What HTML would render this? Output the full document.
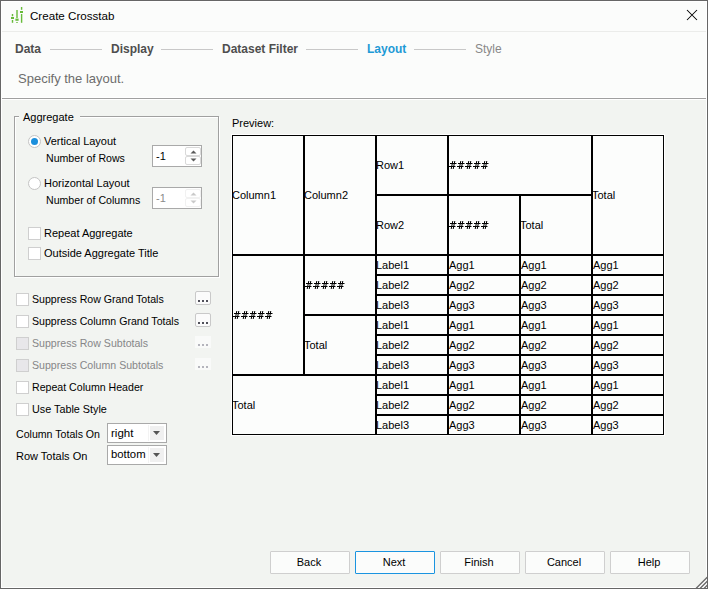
<!DOCTYPE html>
<html><head><meta charset="utf-8">
<style>
*{margin:0;padding:0;box-sizing:border-box}
html,body{width:708px;height:589px;overflow:hidden;background:#fbfcfb}
body{font-family:"Liberation Sans",sans-serif;font-size:12px;color:#000;position:relative}
.a{position:absolute;white-space:nowrap}
#win{position:absolute;left:0;top:0;width:708px;height:589px;border:1px solid #666;background:#fbfcfb}
#inner{position:absolute;left:1px;top:1px;width:706px;height:587px;border:1px solid #fff;}
#body{position:absolute;left:2px;top:100px;width:704px;height:487px;background:#f2f4f1}
.step{font-weight:bold;color:#4e4e4e;font-size:12px}
.sline{position:absolute;height:1px;background:#c8c8c8}
.cb{position:absolute;width:13px;height:13px;border:1px solid #cfcfcf;background:#fff}
.cb.d{background:#e9e9e9;border-color:#ddd}
.btn{position:absolute;top:551px;width:80px;height:23px;border:1px solid #cfcfcf;background:#fbfcfb;border-radius:1px;text-align:center;line-height:21px;padding-right:2px;font-size:11px;color:#000}
#prev{position:absolute;left:231px;top:134px;width:434px;height:302px;background:#fff}
.c{position:absolute;border:1px solid #000;background:#fcfdfc;font-size:11px;line-height:11px;display:flex;align-items:center;padding-left:0px;white-space:nowrap;overflow:hidden}

.t11{font-size:11px;color:#000}
.radio{position:absolute;width:13px;height:13px;border:1px solid #c4c4c4;border-radius:50%;background:#fff}
.radio i{position:absolute;left:2px;top:2px;width:7px;height:7px;border-radius:50%;background:#1b8fdc}
.t11.dis{color:#868688}
.cb.d{background:#e8e7ea;border-color:#cfcfcf}
</style></head><body>
<div id="win"></div>
<div id="inner"></div>
<!-- title -->
<svg class="a" style="left:0;top:0" width="30" height="30" viewBox="0 0 30 30"><g fill="#67bb3a">
<rect x="11.8" y="14" width="1.4" height="2.2"/><rect x="11" y="17" width="3" height="2"/><rect x="11.8" y="20" width="1.4" height="2.8"/>
<rect x="16.3" y="10" width="1.4" height="8"/><rect x="15.4" y="18.6" width="3.2" height="2.2"/><rect x="16.3" y="22" width="1.4" height="1"/>
<rect x="20.9" y="7" width="1.4" height="2.8"/><rect x="20" y="11" width="3" height="2"/><rect x="20.9" y="14" width="1.4" height="8.8"/>
</g></svg>
<div class="a" style="left:30px;top:9px;font-size:11.6px;color:#000">Create Crosstab</div>
<svg class="a" style="left:686px;top:9px" width="12" height="12" viewBox="0 0 12 12"><path d="M1 1L11 11M11 1L1 11" stroke="#000" stroke-width="1.05"/></svg>
<div class="a" style="left:2px;top:31px;width:704px;height:1px;background:#ebecea"></div>
<!-- steps -->
<div class="a step" style="left:15px;top:42px">Data</div>
<div class="sline" style="left:50px;top:49px;width:52px"></div>
<div class="a step" style="left:111px;top:42px">Display</div>
<div class="sline" style="left:161px;top:49px;width:52px"></div>
<div class="a step" style="left:222px;top:42px">Dataset Filter</div>
<div class="sline" style="left:306px;top:49px;width:52px"></div>
<div class="a step" style="left:367px;top:42px;color:#1e9ad6">Layout</div>
<div class="sline" style="left:414px;top:49px;width:52px"></div>
<div class="a" style="left:475px;top:42px;color:#888;font-size:12px">Style</div>
<div class="a" style="left:18px;top:71px;color:#6d6d6d;font-size:13px">Specify the layout.</div>
<div class="a" style="left:2px;top:97px;width:704px;height:1px;background:#fff"></div>
<div class="a" style="left:2px;top:98px;width:704px;height:1px;background:#a0a0a0"></div>
<div class="a" style="left:2px;top:99px;width:704px;height:1px;background:#fff"></div>
<div id="body"></div>
<!-- group box -->
<div class="a" style="left:15px;top:117px;width:205px;height:161px;border:1px solid #fff"></div>
<div class="a" style="left:14px;top:116px;width:205px;height:161px;border:1px solid #a0a0a0"></div>
<div class="a t11" style="left:19px;top:111px;padding:0 6px 0 4px;background:#f2f4f1">Aggregate</div>
<div class="radio" style="left:28px;top:135px"><i></i></div>
<div class="a t11" style="left:44px;top:135px">Vertical Layout</div>
<div class="a t11" style="left:46px;top:152px;font-size:10.6px">Number of Rows</div>
<svg class="a" style="left:152px;top:145px" width="50" height="22" viewBox="0 0 50 22">
<rect x="0.5" y="0.5" width="49" height="21" fill="#fff" stroke="#a9a9a9"/>
<rect x="33.5" y="2.5" width="15" height="8" rx="1.5" fill="#fff" stroke="#d9d9d9"/>
<rect x="33.5" y="11.5" width="15" height="8" rx="1.5" fill="#fff" stroke="#d9d9d9"/>
<polygon points="38.5,8.5 44.5,8.5 41.5,5.5" fill="#5a5a5a"/>
<polygon points="38.5,13.5 44.5,13.5 41.5,16.5" fill="#5a5a5a"/>
</svg><div class="a t11" style="left:156px;top:150px;color:#000">-1</div>
<div class="radio" style="left:28px;top:177px"></div>
<div class="a t11" style="left:44px;top:177px">Horizontal Layout</div>
<div class="a t11" style="left:46px;top:194px;font-size:10.6px">Number of Columns</div>
<svg class="a" style="left:152px;top:187px" width="50" height="22" viewBox="0 0 50 22">
<rect x="0.5" y="0.5" width="49" height="21" fill="#fff" stroke="#a9a9a9"/>
<rect x="33.5" y="2.5" width="15" height="8" rx="1.5" fill="#fff" stroke="#f1f1f1"/>
<rect x="33.5" y="11.5" width="15" height="8" rx="1.5" fill="#fff" stroke="#f1f1f1"/>
<polygon points="38.5,8.5 44.5,8.5 41.5,5.5" fill="#c9c9c9"/>
<polygon points="38.5,13.5 44.5,13.5 41.5,16.5" fill="#c9c9c9"/>
</svg><div class="a t11" style="left:156px;top:192px;color:#8a8a8a">-1</div>
<div class="cb" style="left:28px;top:227px"></div>
<div class="a t11" style="left:44px;top:227px">Repeat Aggregate</div>
<div class="cb" style="left:28px;top:247px"></div>
<div class="a t11" style="left:44px;top:247px">Outside Aggregate Title</div>
<!-- checkboxes -->
<div class="cb" style="left:16px;top:293px"></div>
<div class="a t11" style="left:32px;top:293px;font-size:10.6px">Suppress Row Grand Totals</div>
<div class="a" style="left:195px;top:291px;width:16px;height:14px;border:1px solid #c9c9c9;border-radius:2px;background:#fbfbfb"></div><div class="a" style="left:198px;top:300px;width:2px;height:2px;background:#50505a"></div><div class="a" style="left:202px;top:300px;width:2px;height:2px;background:#50505a"></div><div class="a" style="left:206px;top:300px;width:2px;height:2px;background:#50505a"></div>
<div class="cb" style="left:16px;top:315px"></div>
<div class="a t11" style="left:32px;top:315px;font-size:10.6px">Suppress Column Grand Totals</div>
<div class="a" style="left:195px;top:313px;width:16px;height:14px;border:1px solid #c9c9c9;border-radius:2px;background:#fbfbfb"></div><div class="a" style="left:198px;top:322px;width:2px;height:2px;background:#50505a"></div><div class="a" style="left:202px;top:322px;width:2px;height:2px;background:#50505a"></div><div class="a" style="left:206px;top:322px;width:2px;height:2px;background:#50505a"></div>
<div class="cb d" style="left:16px;top:337px"></div>
<div class="a t11 dis" style="left:32px;top:337px;font-size:10.6px">Suppress Row Subtotals</div>
<div class="a" style="left:195px;top:336px;width:16px;height:12px;background:#f9faf9"></div><div class="a" style="left:198px;top:344px;width:2px;height:2px;background:#b4b4bc"></div><div class="a" style="left:202px;top:344px;width:2px;height:2px;background:#b4b4bc"></div><div class="a" style="left:206px;top:344px;width:2px;height:2px;background:#b4b4bc"></div>
<div class="cb d" style="left:16px;top:359px"></div>
<div class="a t11 dis" style="left:32px;top:359px;font-size:10.6px">Suppress Column Subtotals</div>
<div class="a" style="left:195px;top:358px;width:16px;height:12px;background:#f9faf9"></div><div class="a" style="left:198px;top:366px;width:2px;height:2px;background:#b4b4bc"></div><div class="a" style="left:202px;top:366px;width:2px;height:2px;background:#b4b4bc"></div><div class="a" style="left:206px;top:366px;width:2px;height:2px;background:#b4b4bc"></div>
<div class="cb" style="left:16px;top:381px"></div>
<div class="a t11" style="left:32px;top:381px;font-size:10.6px">Repeat Column Header</div>
<div class="cb" style="left:16px;top:403px"></div>
<div class="a t11" style="left:32px;top:403px;font-size:10.8px">Use Table Style</div>
<div class="a t11" style="left:16px;top:428px;font-size:10.6px">Column Totals On</div>
<div class="a" style="left:107px;top:423px;width:60px;height:20px;border:1px solid #a9a9a9;background:#fff"></div>
<div class="a" style="left:148px;top:425px;width:1px;height:16px;background:#f3f3f3"></div>
<div class="a" style="left:150px;top:426px;width:14px;height:14px;background:#f0f0f0"></div>
<svg class="a" style="left:153px;top:431px" width="7" height="4" viewBox="0 0 7 4"><polygon points="0,0 7,0 3.5,4" fill="#555"/></svg>
<div class="a t11" style="left:111px;top:427px;font-size:11.5px">right</div>
<div class="a t11" style="left:16px;top:450px">Row Totals On</div>
<div class="a" style="left:107px;top:445px;width:60px;height:20px;border:1px solid #a9a9a9;background:#fff"></div>
<div class="a" style="left:148px;top:447px;width:1px;height:16px;background:#f3f3f3"></div>
<div class="a" style="left:150px;top:448px;width:14px;height:14px;background:#f0f0f0"></div>
<svg class="a" style="left:153px;top:453px" width="7" height="4" viewBox="0 0 7 4"><polygon points="0,0 7,0 3.5,4" fill="#555"/></svg>
<div class="a t11" style="left:111px;top:448px;font-size:11.3px">bottom</div>


<div class="a t11" style="left:232px;top:117px">Preview:</div>
<div id="prev"></div>
<div class="c" style="left:232px;top:135px;width:72px;height:120px"><span style="margin-left:-1px">Column1</span></div>
<div class="c" style="left:304px;top:135px;width:72px;height:120px"><span style="margin-left:-1px">Column2</span></div>
<div class="c" style="left:376px;top:135px;width:72px;height:60px"><span style="margin-left:-1px">Row1</span></div>
<div class="c" style="left:448px;top:135px;width:144px;height:60px"><svg width="40" height="8" viewBox="0 0 40 8" style="display:block"><path d="M1 2.5H7.5M0 5.5H6.5M3.8 0L2.2 8M5.8 0L4.2 8M9 2.5H15.5M8 5.5H14.5M11.8 0L10.2 8M13.8 0L12.2 8M17 2.5H23.5M16 5.5H22.5M19.8 0L18.2 8M21.8 0L20.2 8M25 2.5H31.5M24 5.5H30.5M27.8 0L26.2 8M29.8 0L28.2 8M33 2.5H39.5M32 5.5H38.5M35.8 0L34.2 8M37.8 0L36.2 8" stroke="#000" stroke-width="1" fill="none"/></svg></div>
<div class="c" style="left:592px;top:135px;width:72px;height:120px"><span style="margin-left:-1px">Total</span></div>
<div class="c" style="left:376px;top:195px;width:72px;height:60px"><span style="margin-left:-1px">Row2</span></div>
<div class="c" style="left:448px;top:195px;width:72px;height:60px"><svg width="40" height="8" viewBox="0 0 40 8" style="display:block"><path d="M1 2.5H7.5M0 5.5H6.5M3.8 0L2.2 8M5.8 0L4.2 8M9 2.5H15.5M8 5.5H14.5M11.8 0L10.2 8M13.8 0L12.2 8M17 2.5H23.5M16 5.5H22.5M19.8 0L18.2 8M21.8 0L20.2 8M25 2.5H31.5M24 5.5H30.5M27.8 0L26.2 8M29.8 0L28.2 8M33 2.5H39.5M32 5.5H38.5M35.8 0L34.2 8M37.8 0L36.2 8" stroke="#000" stroke-width="1" fill="none"/></svg></div>
<div class="c" style="left:520px;top:195px;width:72px;height:60px"><span style="margin-left:-1px">Total</span></div>
<div class="c" style="left:232px;top:255px;width:72px;height:120px"><svg width="40" height="8" viewBox="0 0 40 8" style="display:block"><path d="M1 2.5H7.5M0 5.5H6.5M3.8 0L2.2 8M5.8 0L4.2 8M9 2.5H15.5M8 5.5H14.5M11.8 0L10.2 8M13.8 0L12.2 8M17 2.5H23.5M16 5.5H22.5M19.8 0L18.2 8M21.8 0L20.2 8M25 2.5H31.5M24 5.5H30.5M27.8 0L26.2 8M29.8 0L28.2 8M33 2.5H39.5M32 5.5H38.5M35.8 0L34.2 8M37.8 0L36.2 8" stroke="#000" stroke-width="1" fill="none"/></svg></div>
<div class="c" style="left:304px;top:255px;width:72px;height:60px"><svg width="40" height="8" viewBox="0 0 40 8" style="display:block"><path d="M1 2.5H7.5M0 5.5H6.5M3.8 0L2.2 8M5.8 0L4.2 8M9 2.5H15.5M8 5.5H14.5M11.8 0L10.2 8M13.8 0L12.2 8M17 2.5H23.5M16 5.5H22.5M19.8 0L18.2 8M21.8 0L20.2 8M25 2.5H31.5M24 5.5H30.5M27.8 0L26.2 8M29.8 0L28.2 8M33 2.5H39.5M32 5.5H38.5M35.8 0L34.2 8M37.8 0L36.2 8" stroke="#000" stroke-width="1" fill="none"/></svg></div>
<div class="c" style="left:304px;top:315px;width:72px;height:60px"><span style="margin-left:-1px">Total</span></div>
<div class="c" style="left:232px;top:375px;width:144px;height:60px"><span style="margin-left:-1px">Total</span></div>
<div class="c" style="left:376px;top:255px;width:72px;height:20px"><span style="margin-left:-1px">Label1</span></div>
<div class="c" style="left:448px;top:255px;width:72px;height:20px">Agg1</div>
<div class="c" style="left:520px;top:255px;width:72px;height:20px">Agg1</div>
<div class="c" style="left:592px;top:255px;width:72px;height:20px">Agg1</div>
<div class="c" style="left:376px;top:275px;width:72px;height:20px"><span style="margin-left:-1px">Label2</span></div>
<div class="c" style="left:448px;top:275px;width:72px;height:20px">Agg2</div>
<div class="c" style="left:520px;top:275px;width:72px;height:20px">Agg2</div>
<div class="c" style="left:592px;top:275px;width:72px;height:20px">Agg2</div>
<div class="c" style="left:376px;top:295px;width:72px;height:20px"><span style="margin-left:-1px">Label3</span></div>
<div class="c" style="left:448px;top:295px;width:72px;height:20px">Agg3</div>
<div class="c" style="left:520px;top:295px;width:72px;height:20px">Agg3</div>
<div class="c" style="left:592px;top:295px;width:72px;height:20px">Agg3</div>
<div class="c" style="left:376px;top:315px;width:72px;height:20px"><span style="margin-left:-1px">Label1</span></div>
<div class="c" style="left:448px;top:315px;width:72px;height:20px">Agg1</div>
<div class="c" style="left:520px;top:315px;width:72px;height:20px">Agg1</div>
<div class="c" style="left:592px;top:315px;width:72px;height:20px">Agg1</div>
<div class="c" style="left:376px;top:335px;width:72px;height:20px"><span style="margin-left:-1px">Label2</span></div>
<div class="c" style="left:448px;top:335px;width:72px;height:20px">Agg2</div>
<div class="c" style="left:520px;top:335px;width:72px;height:20px">Agg2</div>
<div class="c" style="left:592px;top:335px;width:72px;height:20px">Agg2</div>
<div class="c" style="left:376px;top:355px;width:72px;height:20px"><span style="margin-left:-1px">Label3</span></div>
<div class="c" style="left:448px;top:355px;width:72px;height:20px">Agg3</div>
<div class="c" style="left:520px;top:355px;width:72px;height:20px">Agg3</div>
<div class="c" style="left:592px;top:355px;width:72px;height:20px">Agg3</div>
<div class="c" style="left:376px;top:375px;width:72px;height:20px"><span style="margin-left:-1px">Label1</span></div>
<div class="c" style="left:448px;top:375px;width:72px;height:20px">Agg1</div>
<div class="c" style="left:520px;top:375px;width:72px;height:20px">Agg1</div>
<div class="c" style="left:592px;top:375px;width:72px;height:20px">Agg1</div>
<div class="c" style="left:376px;top:395px;width:72px;height:20px"><span style="margin-left:-1px">Label2</span></div>
<div class="c" style="left:448px;top:395px;width:72px;height:20px">Agg2</div>
<div class="c" style="left:520px;top:395px;width:72px;height:20px">Agg2</div>
<div class="c" style="left:592px;top:395px;width:72px;height:20px">Agg2</div>
<div class="c" style="left:376px;top:415px;width:72px;height:20px"><span style="margin-left:-1px">Label3</span></div>
<div class="c" style="left:448px;top:415px;width:72px;height:20px">Agg3</div>
<div class="c" style="left:520px;top:415px;width:72px;height:20px">Agg3</div>
<div class="c" style="left:592px;top:415px;width:72px;height:20px">Agg3</div>
<div class="btn" style="left:270px">Back</div>
<div class="btn" style="left:355px;border-color:#1a94e0">Next</div>
<div class="btn" style="left:440px">Finish</div>
<div class="btn" style="left:525px">Cancel</div>
<div class="btn" style="left:610px">Help</div>

<svg class="a" style="left:688px;top:569px" width="20" height="20" viewBox="0 0 20 20">
<polygon points="8,19 19,8 19,19" fill="#fff"/>
<path d="M8 19.5L19.5 8M12 19.5L19.5 12M16 19.5L19.5 16" stroke="#6a6a6a" stroke-width="1.4"/>
<path d="M0 19.5H20M19.5 0V20" stroke="#666" stroke-width="1"/>
</svg>
</body></html>
